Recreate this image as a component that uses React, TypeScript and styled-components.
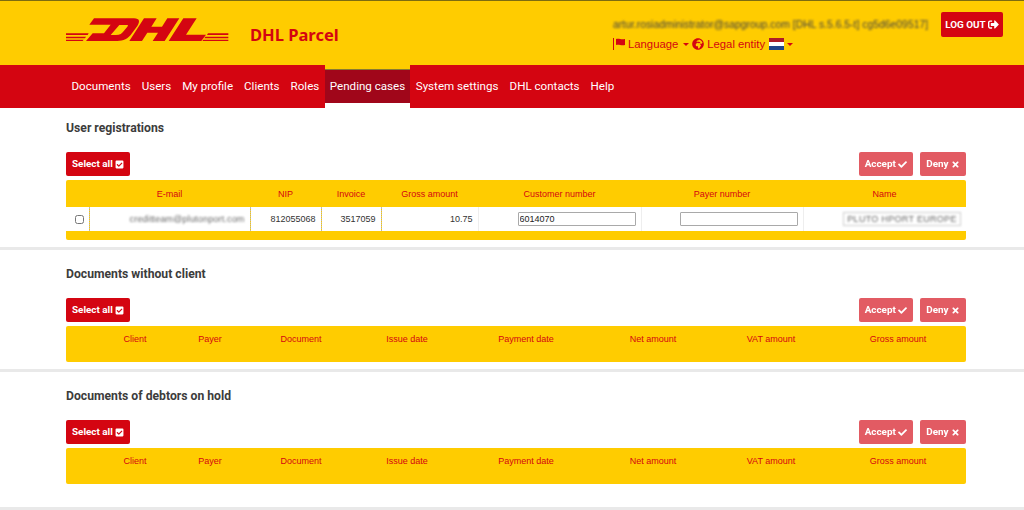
import React from 'react';
import styled, { createGlobalStyle } from 'styled-components';
import { FaCheck, FaCheckSquare, FaGlobeAfrica, FaSignOutAlt, FaTimes } from 'react-icons/fa';

const Global = createGlobalStyle`
  html, body { margin: 0; padding: 0; background: #fff; height: 510px; overflow: hidden; }
  * { box-sizing: border-box; }
`;
const RED = '#d40511';
const YELLOW = '#ffcc00';
const HEAD = `Roboto, "Noto Sans", sans-serif`;
const BODY = `"Liberation Sans", Arial, sans-serif`;

const Page = styled.div`width: 1024px; height: 510px; overflow: hidden; font-family: ${BODY};`;
const Header = styled.header`
  height: 65px; background: ${YELLOW}; border-top: 1px solid #7d6c10;
  display: flex; align-items: flex-start; padding: 0 21px 0 66px;
`;
const LogoWrap = styled.div`width: 184px; margin-top: 9px; flex: none; margin-left: -6px; svg { display: block; }`;
const Brand = styled.div`
  font: 700 16.5px/1 "Noto Sans", sans-serif; color: ${RED}; margin-top: 26px; margin-left: 6px; flex: 1;
`;
const UserBlock = styled.div`width: 328px; margin-top: 17px; flex: none;`;
const UserLine = styled.div`
  font-size: 10.4px; line-height: 13px; color: #444; filter: blur(1.2px); white-space: nowrap;
`;
const Links = styled.div`
  display: flex; align-items: center; margin-top: 6px; color: ${RED}; font-size: 11.3px; line-height: 14px;
  svg { flex: none; }
`;
const Linked = styled.span`margin: 0 4px 0 3px;`;
const Caret = styled.i`
  width: 0; height: 0; border: 3px solid transparent; border-top: 3.5px solid ${RED}; border-bottom: 0;
  margin: 1px 3px 0 1px;
`;
const Btn = styled.button<{ $off?: boolean }>`
  height: 24px; padding: 0 6px; border: 0; border-radius: 2px; background: ${RED}; color: #fff;
  opacity: ${p => (p.$off ? 0.65 : 1)};
  font: 700 9.9px/24px ${HEAD}; display: inline-flex; align-items: center; white-space: pre;
`;
const LogOut = styled(Btn)`height: 25px; width: 62px; margin-top: 11px; flex: none; justify-content: center; padding: 0;`;

const Nav = styled.nav`height: 43px; background: ${RED}; display: flex; padding-left: 66px;`;
const NavItem = styled.a<{ $active?: boolean }>`
  padding: 0 5.5px; font: 400 11.6px/42px ${HEAD}; color: #fff; white-space: nowrap;
  ${p => p.$active && `
    padding: 0 5px;
    background: #a0061a; line-height: 34px; height: 43px;
    border-top: 4px solid ${YELLOW}; border-bottom: 5px solid #fff;
    box-shadow: inset 0 1px 0 #8a7a30;
  `}
`;

const Section = styled.section<{ $h: number }>`
  height: ${p => p.$h}px; border-bottom: 3px solid #e9e9e9; padding: 0 58px 0 66px;
  & + & { padding-top: 4px; }
`;
const Title = styled.h2`
  margin: 0; padding-top: 13px; height: 44px; font: 700 12.2px/14px ${HEAD}; color: #3c3c3c;
`;
const Toolbar = styled.div`display: flex; gap: 7px; height: 28px;`;
const Spacer = styled.div`flex: 1;`;
const Table = styled.table`
  width: 900px; border-collapse: collapse; table-layout: fixed; background: ${YELLOW};
  font-size: 9px; border-radius: 2px;
`;
const Col = styled.col<{ $w: number }>`width: ${p => p.$w}px;`;
const Th = styled.th`
  font-weight: 400; color: ${RED}; height: 27px; padding: 0; text-align: center; vertical-align: middle;
`;
const EmptyTh = styled(Th)`height: 36px; vertical-align: top; padding-top: 8px;`;
const Td = styled.td<{ $dotted?: boolean }>`
  background: #fff; height: 24px; padding: 0 5px; text-align: right; color: #333;
  border-left: 1px ${p => (p.$dotted ? 'dotted #bbb' : 'solid #eee')};
  white-space: nowrap; overflow: hidden;
`;
const CheckCell = styled.td`background: #fff; text-align: center; padding: 0;`;
const Check = styled.input`width: 9px; height: 9px; margin: 0 0 0 4px; vertical-align: middle;`;
const Blur = styled.span`filter: blur(1.2px); color: #666; display: inline-block; letter-spacing: .17px;`;
const FootCell = styled.td`height: 9px; padding: 0;`;
const Field = styled.input`
  width: 118px; height: 14px; border: 1px solid #a9a9a9; border-radius: 1px; padding: 0 1px; margin: 0;
  font: 9px ${BODY}; color: #222; background: #fff; display: block; margin-left: auto;
`;
const BlurField = styled.div`
  width: 118px; height: 14px; border: 1px solid #ccc; margin-left: auto; filter: blur(1px);
  font-size: 9px; line-height: 12px; color: #666; text-align: center; letter-spacing: .3px; overflow: hidden;
`;
const LogoSvg = () => (
  <svg width="180" height="45" viewBox="0 0 540 135" fill={RED}>
    <path d="M18 70h68l-3 5H18zM18 80h60l-3 5H18zM18 89h53l-3 4H18zM444 70h61v5h-64zM436 80h69v5h-72zM430 89h75v4h-78z" />
    <path fillRule="evenodd" d="M102 25H222C240 25 240 36 232 48L212 75C198 91 185 93 165 93H78L98 70H132L152 44H88Z M178 45L152 75H168C180 75 186 70 192 62L202 50C206 45 204 45 198 45Z" />
    <path d="M252 25H290L274 50H306L322 25H358L314 93H278L294 68H262L246 93H208Z" />
    <path d="M370 25H410L378 74H438L424 93H326Z" />
  </svg>
);
const PoleFlag = () => (
  <svg width="12" height="12" viewBox="0 0 12 12" fill={RED}>
    <rect x="0" y="0" width="1" height="12" />
    <path d="M3 1c3-1 5 1 9 0v6c-4 1-6-1-9 0z" />
  </svg>
);

const emptyCols = [30, 78, 72, 110, 102, 136, 118, 118, 136];
const emptyHeads = ['', 'Client', 'Payer', 'Document', 'Issue date', 'Payment date', 'Net amount', 'VAT amount', 'Gross amount'];

const Actions = () => (
  <Toolbar>
    <Btn>Select all <FaCheckSquare size={9} /></Btn>
    <Spacer />
    <Btn $off>Accept <FaCheck size={9} /></Btn>
    <Btn $off>Deny <FaTimes size={9} /></Btn>
  </Toolbar>
);

const EmptyTable = () => (
  <Table>
    <colgroup>{emptyCols.map((w, i) => <Col key={i} $w={w} />)}</colgroup>
    <thead><tr>{emptyHeads.map((h, i) => <EmptyTh key={i}>{h}</EmptyTh>)}</tr></thead>
  </Table>
);

const Flag = () => (
  <svg width="15" height="12" viewBox="0 0 15 12" style={{ margin: '0 2px 0 0' }}>
    <rect width="15" height="4" fill="#ae1c28" /><rect y="4" width="15" height="4" fill="#fff" /><rect y="8" width="15" height="4" fill="#21468b" />
  </svg>
);

export default function App() {
  return (
    <Page>
      <Global />
      <Header>
        <LogoWrap><LogoSvg /></LogoWrap>
        <Brand>DHL Parcel</Brand>
        <UserBlock>
          <UserLine>artur.rosiadministrator@sapgroup.com [DHL s.5.6.5-t] cg5d6e09517]</UserLine>
          <Links>
            <PoleFlag />
            <Linked>Language</Linked><Caret />
            <FaGlobeAfrica size={12} />
            <Linked>Legal entity</Linked><Flag /><Caret />
          </Links>
        </UserBlock>
        <LogOut>LOG OUT <FaSignOutAlt size={11} /></LogOut>
      </Header>
      <Nav>
        {['Documents', 'Users', 'My profile', 'Clients', 'Roles'].map(n => <NavItem key={n}>{n}</NavItem>)}
        <NavItem $active>Pending cases</NavItem>
        {['System settings', 'DHL contacts', 'Help'].map(n => <NavItem key={n}>{n}</NavItem>)}
      </Nav>
      <Section $h={142}>
        <Title>User registrations</Title>
        <Actions />
        <Table>
          <colgroup>
            {[23, 161, 71, 60, 97, 163, 162, 163].map((w, i) => <Col key={i} $w={w} />)}
          </colgroup>
          <thead>
            <tr>
              {['', 'E-mail', 'NIP', 'Invoice', 'Gross amount', 'Customer number', 'Payer number', 'Name'].map((h, i) => <Th key={i}>{h}</Th>)}
            </tr>
          </thead>
          <tbody>
            <tr>
              <CheckCell><Check type="checkbox" /></CheckCell>
              <Td $dotted><Blur>creditteam@plutonport.com</Blur></Td>
              <Td $dotted>812055068</Td>
              <Td $dotted>3517059</Td>
              <Td $dotted>10.75</Td>
              <Td><Field defaultValue="6014070" /></Td>
              <Td><Field /></Td>
              <Td><BlurField>PLUTO HPORT EUROPE</BlurField></Td>
            </tr>
            <tr><FootCell colSpan={8} /></tr>
          </tbody>
        </Table>
      </Section>
      <Section $h={122}>
        <Title>Documents without client</Title>
        <Actions />
        <EmptyTable />
      </Section>
      <Section $h={138}>
        <Title>Documents of debtors on hold</Title>
        <Actions />
        <EmptyTable />
      </Section>
    </Page>
  );
}
